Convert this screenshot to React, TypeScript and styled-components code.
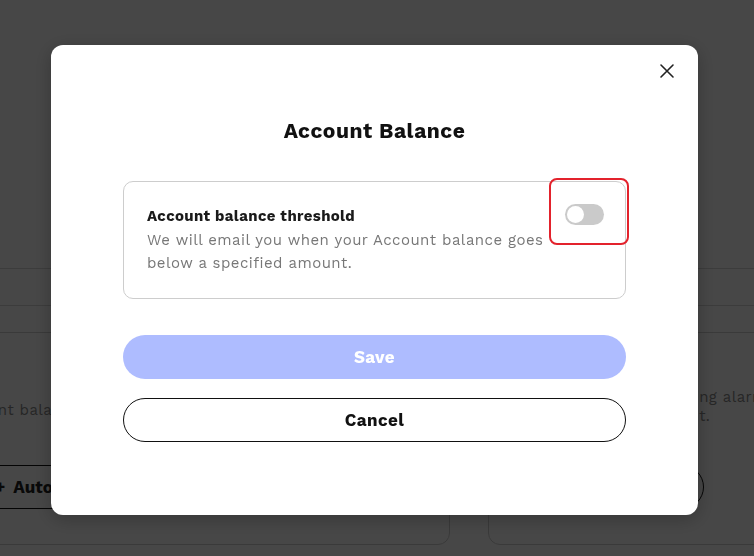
import React from "react";
import styled, { createGlobalStyle } from "styled-components";

const Global = createGlobalStyle`
  html, body { margin: 0; padding: 0; }
  body {
    width: 754px;
    height: 556px;
    overflow: hidden;
    background: #ffffff;
    font-family: "Work Sans", Inter, "Open Sans", sans-serif;
  }
  * { box-sizing: border-box; }
`;

/* ---------- background page ---------- */
const Page = styled.div`
  width: 754px;
  height: 556px;
  display: flex;
  flex-direction: column;
`;
const TopArea = styled.div`
  height: 268px;
`;
const TabBand = styled.div`
  height: 38px;
  border-top: 1px solid #d8d8d8;
  border-bottom: 1px solid #d8d8d8;
`;
const CardRow = styled.div`
  display: grid;
  grid-template-columns: 500px 500px;
  gap: 38px;
  margin-left: -50px;
  width: 1038px;
  padding-top: 26px;
`;
const BgCard = styled.div`
  height: 213px;
  border: 1px solid #cfcfcf;
  border-radius: 12px;
  padding: 24px;
  display: flex;
  flex-direction: column;
  align-items: flex-start;
`;
const BgText = styled.p<{ $indent: number; $top: number }>`
  margin: ${(p) => p.$top}px 0 0 ${(p) => p.$indent}px;
  font-size: 15px;
  line-height: 19px;
  letter-spacing: 0.4px;
  color: #8a8a8a;
  white-space: nowrap;
`;
const BgButton = styled.div<{ $top: number }>`
  margin-top: ${(p) => p.$top}px;
  width: 191px;
  height: 44px;
  border: 1px solid #111;
  border-radius: 22px;
  display: flex;
  align-items: center;
  gap: 8px;
  padding: 0 19px;
  font-weight: 700;
  font-size: 17px;
  color: #222;
  white-space: nowrap;
`;

/* ---------- modal ---------- */
const Overlay = styled.div`
  position: fixed;
  inset: 0;
  background: rgba(0, 0, 0, 0.72);
  display: flex;
  justify-content: center;
  align-items: flex-start;
  padding: 45px 5px 0 0;
`;
const Modal = styled.div`
  position: relative;
  width: 647px;
  height: 470px;
  background: #ffffff;
  border-radius: 12px;
  padding: 72px 72px 0;
  display: flex;
  flex-direction: column;
  box-shadow: 0 4px 20px rgba(0, 0, 0, 0.25);
`;
const CloseButton = styled.button`
  position: absolute;
  top: 17px;
  right: 22px;
  width: 18px;
  height: 18px;
  padding: 0;
  border: none;
  background: none;
  display: flex;
  align-items: center;
  justify-content: center;
  cursor: pointer;
`;
const Title = styled.h2`
  margin: 0 0 36px;
  text-align: center;
  font-size: 21px;
  line-height: 28px;
  letter-spacing: 0.5px;
  font-weight: 700;
  color: #111;
`;
const SettingCard = styled.div`
  border: 1px solid #cdcdcd;
  border-radius: 10px;
  padding: 23px 21px 23px 23px;
  display: flex;
  justify-content: space-between;
  align-items: flex-start;
  gap: 16px;
`;
const SettingText = styled.div`
  display: flex;
  flex-direction: column;
`;
const SettingTitle = styled.div`
  font-size: 15px;
  line-height: 22px;
  letter-spacing: 0.35px;
  font-weight: 700;
  color: #1a1a1a;
`;
const SettingDesc = styled.div`
  margin-top: 2px;
  font-size: 15px;
  line-height: 23px;
  letter-spacing: 0.45px;
  color: #777777;
`;
const ToggleWrap = styled.div`
  position: relative;
  margin-top: -1px;
  flex-shrink: 0;
`;
const Toggle = styled.div`
  width: 39px;
  height: 21px;
  border-radius: 11px;
  background: #cacaca;
  position: relative;
`;
const Knob = styled.div`
  position: absolute;
  left: 2px;
  top: 2px;
  width: 17px;
  height: 17px;
  border-radius: 50%;
  background: #ffffff;
`;
const Highlight = styled.div`
  position: absolute;
  left: -16px;
  top: -26px;
  width: 80px;
  height: 67px;
  border: 2px solid #e3222c;
  border-radius: 8px;
`;
const Actions = styled.div`
  margin-top: 36px;
  display: flex;
  flex-direction: column;
  gap: 19px;
`;
const PillButton = styled.button<{ $variant: "primary" | "outline" }>`
  height: 44px;
  width: 100%;
  border-radius: 22px;
  font-family: inherit;
  font-size: 17px;
  letter-spacing: 0.4px;
  font-weight: 700;
  cursor: pointer;
  background: ${(p) => (p.$variant === "primary" ? "#aebcff" : "#ffffff")};
  color: ${(p) => (p.$variant === "primary" ? "#ffffff" : "#111111")};
  border: ${(p) => (p.$variant === "primary" ? "none" : "1px solid #111111")};
`;

export default function App() {
  return (
    <>
      <Global />
      <Page>
        <TopArea />
        <TabBand />
        <CardRow>
          <BgCard>
            <BgText $indent={-24} $top={44}>
              Account balance top-up
            </BgText>
            <BgButton $top={45}>
              <span>+</span>
              <span>Auto top-up</span>
            </BgButton>
          </BgCard>
          <BgCard>
            <BgText $indent={0} $top={31}>
              Get a low balance warning alarm by email
              <br />
              as you reach the amount.
            </BgText>
            <BgButton $top={39} />
          </BgCard>
        </CardRow>
      </Page>
      <Overlay>
        <Modal>
          <CloseButton aria-label="Close">
            <svg width="16" height="16" viewBox="0 0 16 16" fill="none" stroke="#222" strokeWidth="1.6" strokeLinecap="round">
              <path d="M2 2 L14 14 M14 2 L2 14" />
            </svg>
          </CloseButton>
          <Title>Account Balance</Title>
          <SettingCard>
            <SettingText>
              <SettingTitle>Account balance threshold</SettingTitle>
              <SettingDesc>
                We will email you when your Account balance goes below a specified amount.
              </SettingDesc>
            </SettingText>
            <ToggleWrap>
              <Toggle>
                <Knob />
              </Toggle>
              <Highlight />
            </ToggleWrap>
          </SettingCard>
          <Actions>
            <PillButton $variant="primary">Save</PillButton>
            <PillButton $variant="outline">Cancel</PillButton>
          </Actions>
        </Modal>
      </Overlay>
    </>
  );
}
